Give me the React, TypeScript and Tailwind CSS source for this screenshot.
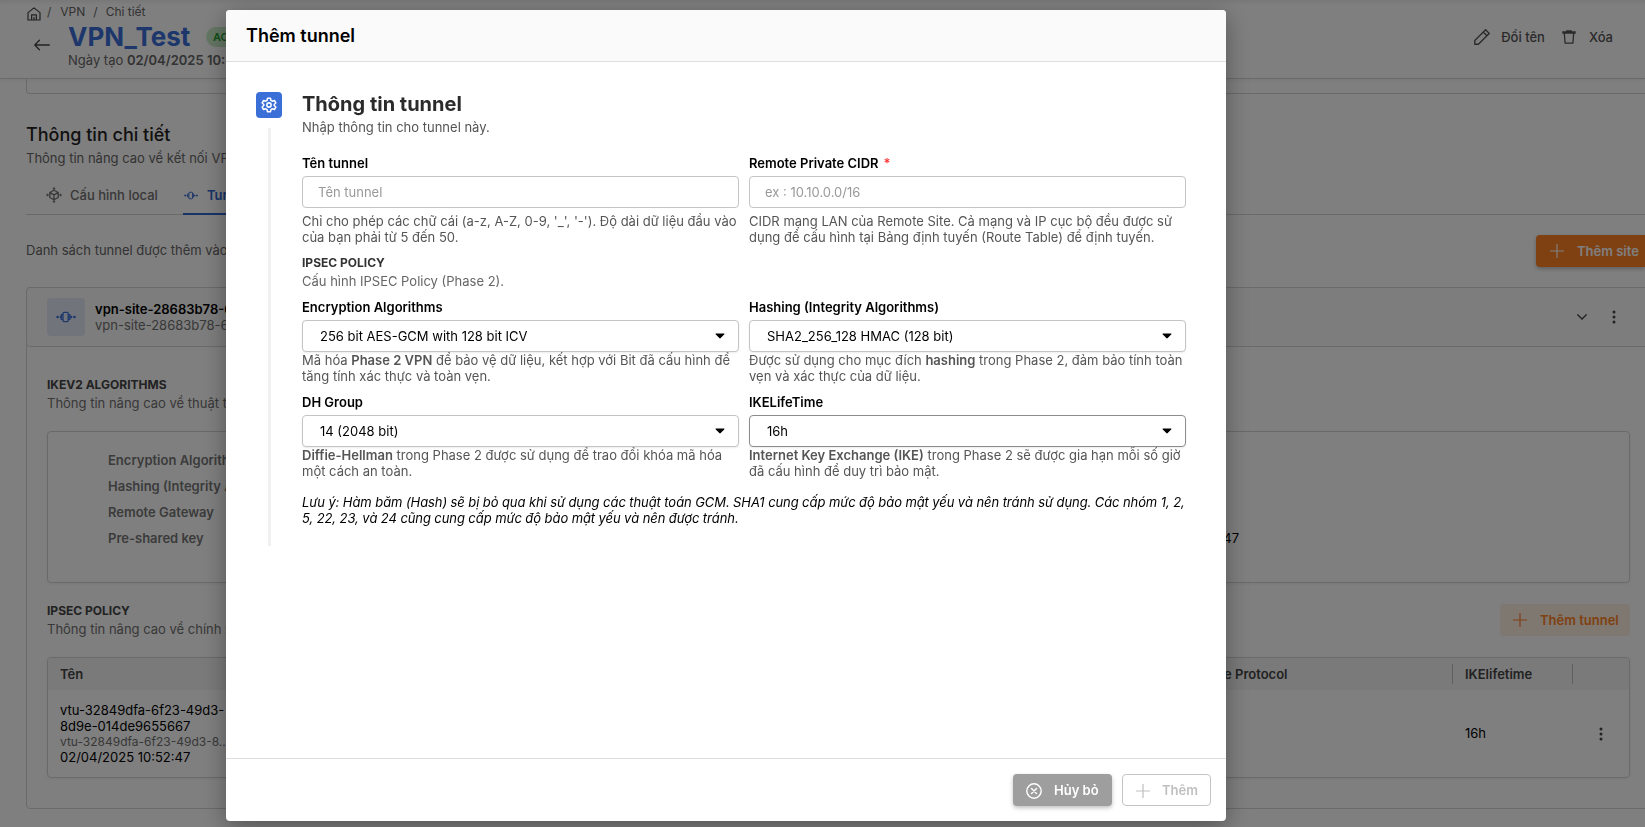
import React, { ReactNode } from "react";

type IconProps = { className?: string };

function HomeIcon({ className }: IconProps) {
  return (
    <svg viewBox="0 0 14 14" className={className} fill="none" stroke="currentColor" strokeWidth="1.2" strokeLinejoin="round">
      <path d="M1 5.6 7 .9l6 4.7V13H1z" />
      <path d="M4.6 13V7.8h4.8V13M7 10v3" />
    </svg>
  );
}

function BackIcon({ className }: IconProps) {
  return (
    <svg viewBox="0 0 16 12" className={className} fill="none" stroke="currentColor" strokeWidth="1.3" strokeLinecap="round" strokeLinejoin="round">
      <path d="M15.3 6H.9M5.4 1.3.8 6l4.6 4.7" />
    </svg>
  );
}

function PencilIcon({ className }: IconProps) {
  return (
    <svg viewBox="0 0 16 16" className={className} fill="none" stroke="currentColor" strokeWidth="1.35" strokeLinejoin="round">
      <path d="M.8 15.2v-3.6L11.6.8l3.6 3.6L4.4 15.2zM9.3 3.1l3.6 3.6" />
    </svg>
  );
}

function TrashIcon({ className }: IconProps) {
  return (
    <svg viewBox="0 0 14 14" className={className} fill="none" stroke="currentColor" strokeWidth="1.3" strokeLinejoin="round">
      <path d="M.3 2h13.4M.3 3h13.4M4.2 1h5.6M2.3 3l.8 10.2h7.8L11.7 3" />
    </svg>
  );
}

function PlusIcon({ className }: IconProps) {
  return (
    <svg viewBox="0 0 14 14" className={className} fill="none" stroke="currentColor" strokeWidth="1.2">
      <path d="M7 0v14M0 7h14" />
    </svg>
  );
}

function LocalIcon({ className }: IconProps) {
  return (
    <svg viewBox="0 0 16 16" className={className} fill="none" stroke="currentColor" strokeWidth="1.3" strokeLinejoin="round">
      <path d="m8 3.2 4.2 2.3v5L8 12.8l-4.2-2.3v-5zM3.9 5.6 8 7.9l4.1-2.3M8 8v4.6" />
      <g fill="currentColor" stroke="none">
        <path d="M8 0l1.7 1.7H8.6v1.5H7.4V1.7H6.3z" />
        <path d="M8 16l1.7-1.7H8.6v-1.5H7.4v1.5H6.3z" />
        <path d="M0 8l1.7-1.7v1.1h2v1.2h-2v1.1z" />
        <path d="M16 8l-1.7-1.7v1.1h-2v1.2h2v1.1z" />
      </g>
    </svg>
  );
}

function TunnelIcon({ className }: IconProps) {
  return (
    <svg viewBox="0 0 20 12" className={className} fill="none" stroke="currentColor" strokeWidth="1.3">
      <rect x="7" y="1.4" width="5.2" height="9.2" rx="1" />
      <path d="M6.8 3.7H5.3v4.6h1.5M12.4 3.7h1.4v4.6h-1.4" />
      <g fill="currentColor" stroke="none">
        <circle cx="1.6" cy="6" r="1.3" />
        <circle cx="4.6" cy="6" r="1" />
        <circle cx="15.2" cy="6" r="1.2" />
        <circle cx="18.5" cy="6" r="1.3" />
      </g>
    </svg>
  );
}

function DotsIcon({ className }: IconProps) {
  return (
    <svg viewBox="0 0 4 14" className={className} fill="currentColor">
      <circle cx="2" cy="1.9" r="1.5" />
      <circle cx="2" cy="7" r="1.5" />
      <circle cx="2" cy="12.1" r="1.5" />
    </svg>
  );
}

function GearIcon({ className }: IconProps) {
  return (
    <svg viewBox="0 0 24 24" className={className} fill="none" stroke="currentColor" strokeWidth="2.3" strokeLinejoin="round">
      <path d="M9.8 1.8h4.4l.7 3.3 2 1.2 3.2-1.1 2.2 3.8-2.5 2.2v1.6l2.5 2.2-2.2 3.8-3.2-1.1-2 1.2-.7 3.3H9.8l-.7-3.3-2-1.2-3.2 1.1L1.7 15l2.5-2.2v-1.6L1.7 9l2.2-3.8 3.2 1.1 2-1.2z" />
      <circle cx="12" cy="12" r="3.2" />
    </svg>
  );
}

function CloseCircleIcon({ className }: IconProps) {
  return (
    <svg viewBox="0 0 16 16" className={className} fill="none" stroke="currentColor" strokeWidth="1.4" strokeLinecap="round">
      <circle cx="8" cy="8" r="7.2" />
      <path d="m5.5 5.5 5 5m0-5-5 5" />
    </svg>
  );
}

function Field({ label, required, help, children }: { label: string; required?: boolean; help: ReactNode; children: ReactNode }) {
  return (
    <div className="flex flex-col">
      <label className="mb-[5px] h-4 font-semibold text-black">
        {label}
        {required && <span className="ml-[5px] text-[#ff3333]">*</span>}
      </label>
      {children}
      {help}
    </div>
  );
}

function TextInput({ placeholder }: { placeholder: string }) {
  return (
    <input
      placeholder={placeholder}
      className="mb-[5px] h-8 w-full rounded border border-[#c4c4c4] bg-white px-[15px] text-[13px] outline-none placeholder:text-[#999999]"
    />
  );
}

function SelectBox({ value, active }: { value: string; active?: boolean }) {
  return (
    <button
      className={`flex h-8 w-full items-center justify-between rounded border bg-white pl-[17px] pr-[13px] text-black shadow-[0_1px_2px_rgba(0,0,0,0.08)] ${active ? "border-[#8c8c8c]" : "border-[#c4c4c4]"}`}
    >
      <span>{value}</span>
      <svg viewBox="0 0 10 6" className="h-[6px] w-[10px]" fill="currentColor">
        <path d="M1.2.4h7.6c.6 0 .8.6.4 1L5.7 5.1c-.4.4-1 .4-1.4 0L.8 1.4C.4 1 .6.4 1.2.4z" />
      </svg>
    </button>
  );
}

function Help({ children }: { children: ReactNode }) {
  return <p className="text-[#555555]">{children}</p>;
}

function TunnelDialog() {
  return (
    <section className="fixed left-[226px] top-[10px] flex h-[811px] w-[1000px] flex-col overflow-hidden rounded bg-white shadow-[0_6px_24px_rgba(0,0,0,0.35)]">
      <header className="flex h-[52px] shrink-0 items-center border-b border-[#dedede] bg-[#fafafa] px-5 text-lg font-semibold text-black">
        Thêm tunnel
      </header>

      <div className="flex grow pl-[30px] pr-10 pt-[30px]">
        <div className="flex w-[46px] shrink-0 flex-col">
          <div className="flex size-[26px] items-center justify-center rounded bg-[#3a6fd8] text-white">
            <GearIcon className="size-4" />
          </div>
          <div className="ml-3 mt-[10px] h-[418px] w-[3px] bg-[#f0f0f0]" />
        </div>

        <div className="flex grow flex-col">
          <h2 className="h-[27px] text-[20px] font-bold leading-6 text-[#2b2b2b]">Thông tin tunnel</h2>
          <p className="mb-5 text-[#555555]">Nhập thông tin cho tunnel này.</p>
          <div className="grid grid-cols-2 gap-x-[10px]">
            <Field label="Tên tunnel" help={<Help>Chỉ cho phép các chữ cái (a-z, A-Z, 0-9, '_', '-'). Độ dài dữ liệu đầu vào của bạn phải từ 5 đến 50.</Help>}>
              <TextInput placeholder="Tên tunnel" />
            </Field>
            <Field label="Remote Private CIDR" required help={<Help>CIDR mạng LAN của Remote Site. Cả mạng và IP cục bộ đều được sử dụng để cấu hình tại Bảng định tuyến (Route Table) để định tuyến.</Help>}>
              <TextInput placeholder="ex : 10.10.0.0/16" />
            </Field>
          </div>
          <h3 className="mt-[10px] text-[12px] font-bold text-[#333333]">IPSEC POLICY</h3>
          <p className="mt-[2px] text-[#666666]">Cấu hình IPSEC Policy (Phase 2).</p>
          <div className="mt-[10px] grid grid-cols-2 gap-x-[10px] gap-y-[10px]">
            <Field label="Encryption Algorithms" help={<Help>Mã hóa <b className="font-semibold">Phase 2 VPN</b> để bảo vệ dữ liệu, kết hợp với Bit đã cấu hình để tăng tính xác thực và toàn vẹn.</Help>}>
              <SelectBox value="256 bit AES-GCM with 128 bit ICV" />
            </Field>
            <Field label="Hashing (Integrity Algorithms)" help={<Help>Được sử dụng cho mục đích <b className="font-semibold">hashing</b> trong Phase 2, đảm bảo tính toàn vẹn và xác thực của dữ liệu.</Help>}>
              <SelectBox value="SHA2_256_128 HMAC (128 bit)" />
            </Field>
            <Field label="DH Group" help={<Help><b className="font-semibold">Diffie-Hellman</b> trong Phase 2 được sử dụng để trao đổi khóa mã hóa một cách an toàn.</Help>}>
              <SelectBox value="14 (2048 bit)" />
            </Field>
            <Field label="IKELifeTime" help={<Help><b className="font-semibold">Internet Key Exchange (IKE)</b> trong Phase 2 sẽ được gia hạn mỗi số giờ đã cấu hình để duy trì bảo mật.</Help>}>
              <SelectBox value="16h" active />
            </Field>
          </div>
          <p className="-mr-2 mt-[15px] italic tracking-[-0.09px] text-black">
            Lưu ý: Hàm băm (Hash) sẽ bị bỏ qua khi sử dụng các thuật toán GCM. SHA1 cung cấp mức độ bảo mật yếu và nên tránh sử dụng. Các nhóm 1, 2, 5, 22, 23, và 24 cũng cung cấp mức độ bảo mật yếu và nên được tránh.
          </p>
        </div>
      </div>

      <footer className="flex h-[63px] shrink-0 justify-end gap-[10px] border-t border-[#dedede] px-[15px] pt-[15px]">
        <button className="flex h-8 w-[99px] items-center rounded bg-[#9e9e9e] pl-[13px] font-semibold text-white shadow-[0_2px_4px_rgba(0,0,0,0.25)]">
          <CloseCircleIcon className="mr-3 mt-0.5 size-4" />
          Hủy bỏ
        </button>
        <button className="flex h-8 w-[89px] items-center rounded border border-[#c4c4c4] bg-white pl-[13px] font-semibold text-[#bfbfbf]">
          <PlusIcon className="mr-3 mt-0.5 size-[14px]" />
          Thêm
        </button>
      </footer>
    </section>
  );
}

function PageHeader() {
  return (
    <header className="flex h-[79px] shrink-0 justify-between border-b border-[#d4d4d4] bg-white shadow-[inset_0_4px_4px_-2px_rgba(0,0,0,0.08),0_2px_4px_rgba(0,0,0,0.05)]">
      <div className="flex flex-col pl-[27px] pt-1">
        <nav className="flex h-4 items-center text-[12px] text-[#666666]">
          <HomeIcon className="mt-[3px] size-[14px] text-[#444444]" />
          <span className="ml-[6px]">/</span>
          <span className="ml-[9px]">VPN</span>
          <span className="ml-2">/</span>
          <span className="ml-2">Chi tiết</span>
        </nav>
        <div className="flex">
          <BackIcon className="ml-[7px] mr-[18px] mt-[19px] h-3 w-4 text-[#444444]" />
          <div className="flex flex-col">
            <div className="flex h-8 items-center pt-px">
              <h1 className="w-[138px] text-[26px] font-bold text-[#3a6fd8]">VPN_Test</h1>
              <span className="rounded-full bg-[#c9ecc9] px-[7px] text-[11px] font-semibold leading-5 text-[#1f9d2f]">ACTIVE</span>
            </div>
            <p className="text-[#666666]">
              Ngày tạo <b className="font-semibold">02/04/2025 10:52:47</b>
            </p>
          </div>
        </div>
      </div>
      <div className="flex h-[74px] items-center pr-8 font-medium text-[#555555]">
        <PencilIcon className="mr-[11px] size-4" />
        Đổi tên
        <TrashIcon className="ml-[17px] mr-[13px] size-[14px]" />
        Xóa
      </div>
    </header>
  );
}

function SectionTitle({ title, children }: { title: string; children: ReactNode }) {
  return (
    <div>
      <h3 className="text-[12px] font-bold text-[#444444]">{title}</h3>
      <p className="mt-[2px] text-[#707070]">{children}</p>
    </div>
  );
}

function Detail({ label, value }: { label: string; value: string }) {
  return (
    <div className="flex h-[26px] items-center">
      <span className="w-[200px] font-semibold text-[#777777]">{label}</span>
      <span className="text-black">{value}</span>
    </div>
  );
}

function SiteCard() {
  return (
    <div className="flex h-[522px] w-[1640px] shrink-0 flex-col rounded border border-[#d4d4d4]">
      <div className="-mx-px -mt-px flex h-[60px] shrink-0 items-center rounded border border-[#d4d4d4] bg-[#fafafa] pl-5">
        <div className="mr-[10px] flex size-[38px] items-center justify-center rounded bg-[#e3eaf7] text-[#3a6fd8]">
          <TunnelIcon className="h-3 w-5" />
        </div>
        <div className="flex flex-col">
          <span className="font-semibold text-black">vpn-site-28683b78-6f23-49d3</span>
          <span className="text-[#707070]">vpn-site-28683b78-6f23-49d3</span>
        </div>
        <svg viewBox="0 0 10 6" className="ml-auto mr-[25px] h-[6px] w-[10px] text-[#444444]" fill="none" stroke="currentColor" strokeWidth="1.3">
          <path d="m.4.4 4.6 4.6L9.6.4" />
        </svg>
        <DotsIcon className="mr-[49px] h-[14px] w-1 text-[#444444]" />
      </div>
      <div className="flex flex-col pl-5 pr-9">
        <div className="mt-[30px]">
          <SectionTitle title="IKEV2 ALGORITHMS">Thông tin nâng cao về thuật toán</SectionTitle>
        </div>
        <div className="mt-[20px] flex h-[152px] w-[1583px] gap-[34px] rounded border border-[#d4d4d4] pl-[60px] pt-[15px] shadow-[0_1px_4px_rgba(0,0,0,0.06)]">
          <div className="w-[760px]">
            <Detail label="Encryption Algorithms" value="256 bit AES" />
            <Detail label="Hashing (Integrity Algorithms)" value="SHA2_256" />
            <Detail label="Remote Gateway" value="10.0.0.1" />
            <Detail label="Pre-shared key" value="********" />
          </div>
          <div className="flex w-[337px] flex-col justify-end pb-[36px]">
            <span className="text-right text-black">02/04/2025 10:52:47</span>
          </div>
        </div>
        <div className="mt-[20px] flex w-[1583px] items-start justify-between">
          <SectionTitle title="IPSEC POLICY">Thông tin nâng cao về chính sách</SectionTitle>
          <button className="mt-px flex h-8 w-[130px] items-center rounded bg-[#fff0e0] pl-[13px] font-semibold text-[#ff8125]">
            <PlusIcon className="mr-[13px] size-[14px]" />
            Thêm tunnel
          </button>
        </div>
        <div className="mt-[20px] h-[121px] w-[1583px] overflow-hidden rounded border border-[#d4d4d4] shadow-[0_1px_4px_rgba(0,0,0,0.06)]">
          <div className="flex h-[32px] items-center bg-[#f5f5f5] pl-3 font-semibold text-[#444444]">
            <span className="w-[1124px]">Tên</span>
            <span className="w-[268px]">Remote Protocol</span>
            <span className="flex h-5 w-[121px] items-center border-x border-[#bdbdbd] pl-3">IKElifetime</span>
          </div>
          <div className="flex h-[87px] items-center pl-3 text-black">
            <div className="w-[1405px]">
              <p>vtu-32849dfa-6f23-49d3-</p>
              <p>8d9e-014de9655667</p>
              <p className="text-[12px] leading-[15px] text-[#707070]">vtu-32849dfa-6f23-49d3-8...</p>
              <p>02/04/2025 10:52:47</p>
            </div>
            <span className="pb-px">16h</span>
            <DotsIcon className="ml-auto mr-[26px] h-[14px] w-1 text-[#444444]" />
          </div>
        </div>
      </div>
    </div>
  );
}

export default function App() {
  return (
    <main className="h-[827px] w-[1645px] overflow-hidden whitespace-normal bg-white font-['Inter',sans-serif] text-[13px] leading-4">
      <div className="flex h-full flex-col whitespace-nowrap">
        <PageHeader />
        <div className="flex grow flex-col overflow-hidden pl-[26px]">
          <div className="h-[15px] w-[1640px] shrink-0 rounded-b border border-t-0 border-[#d4d4d4]" />
          <h2 className="mt-[29px] text-[18px] font-medium leading-6 text-[#222222]">Thông tin chi tiết</h2>
          <p className="mt-[3px] text-[#666666]">Thông tin nâng cao về kết nối VPN</p>
          <div className="mt-[9px] flex h-[40px] shrink-0 border-b border-[#d4d4d4] font-medium">
            <div className="flex w-[157px] items-center pl-5 text-[#707070]">
              <LocalIcon className="mr-2 size-4" />
              Cấu hình local
            </div>
            <div className="flex h-[40px] w-[100px] shrink-0 items-center border-b-2 border-[#2f66d0] pl-px pt-0.5 font-semibold text-[#2f66d0]">
              <TunnelIcon className="mr-[9px] h-[9px] w-[14px]" />
              Tunnels
            </div>
          </div>
          <div className="mt-5 flex shrink-0 items-center justify-between text-[#666666]">
            <span className="pb-0.5">Danh sách tunnel được thêm vào</span>
            <button className="flex h-8 w-[109px] items-center rounded-l bg-[#ff8125] pl-[14px] font-semibold text-white shadow-[0_2px_4px_rgba(0,0,0,0.25)]">
              <PlusIcon className="mr-[13px] size-[14px]" />
              Thêm site
            </button>
          </div>
          <div className="h-5 shrink-0" />
          <SiteCard />
        </div>
      </div>
      <div className="fixed inset-0 bg-black/50" />
      <TunnelDialog />
    </main>
  );
}
